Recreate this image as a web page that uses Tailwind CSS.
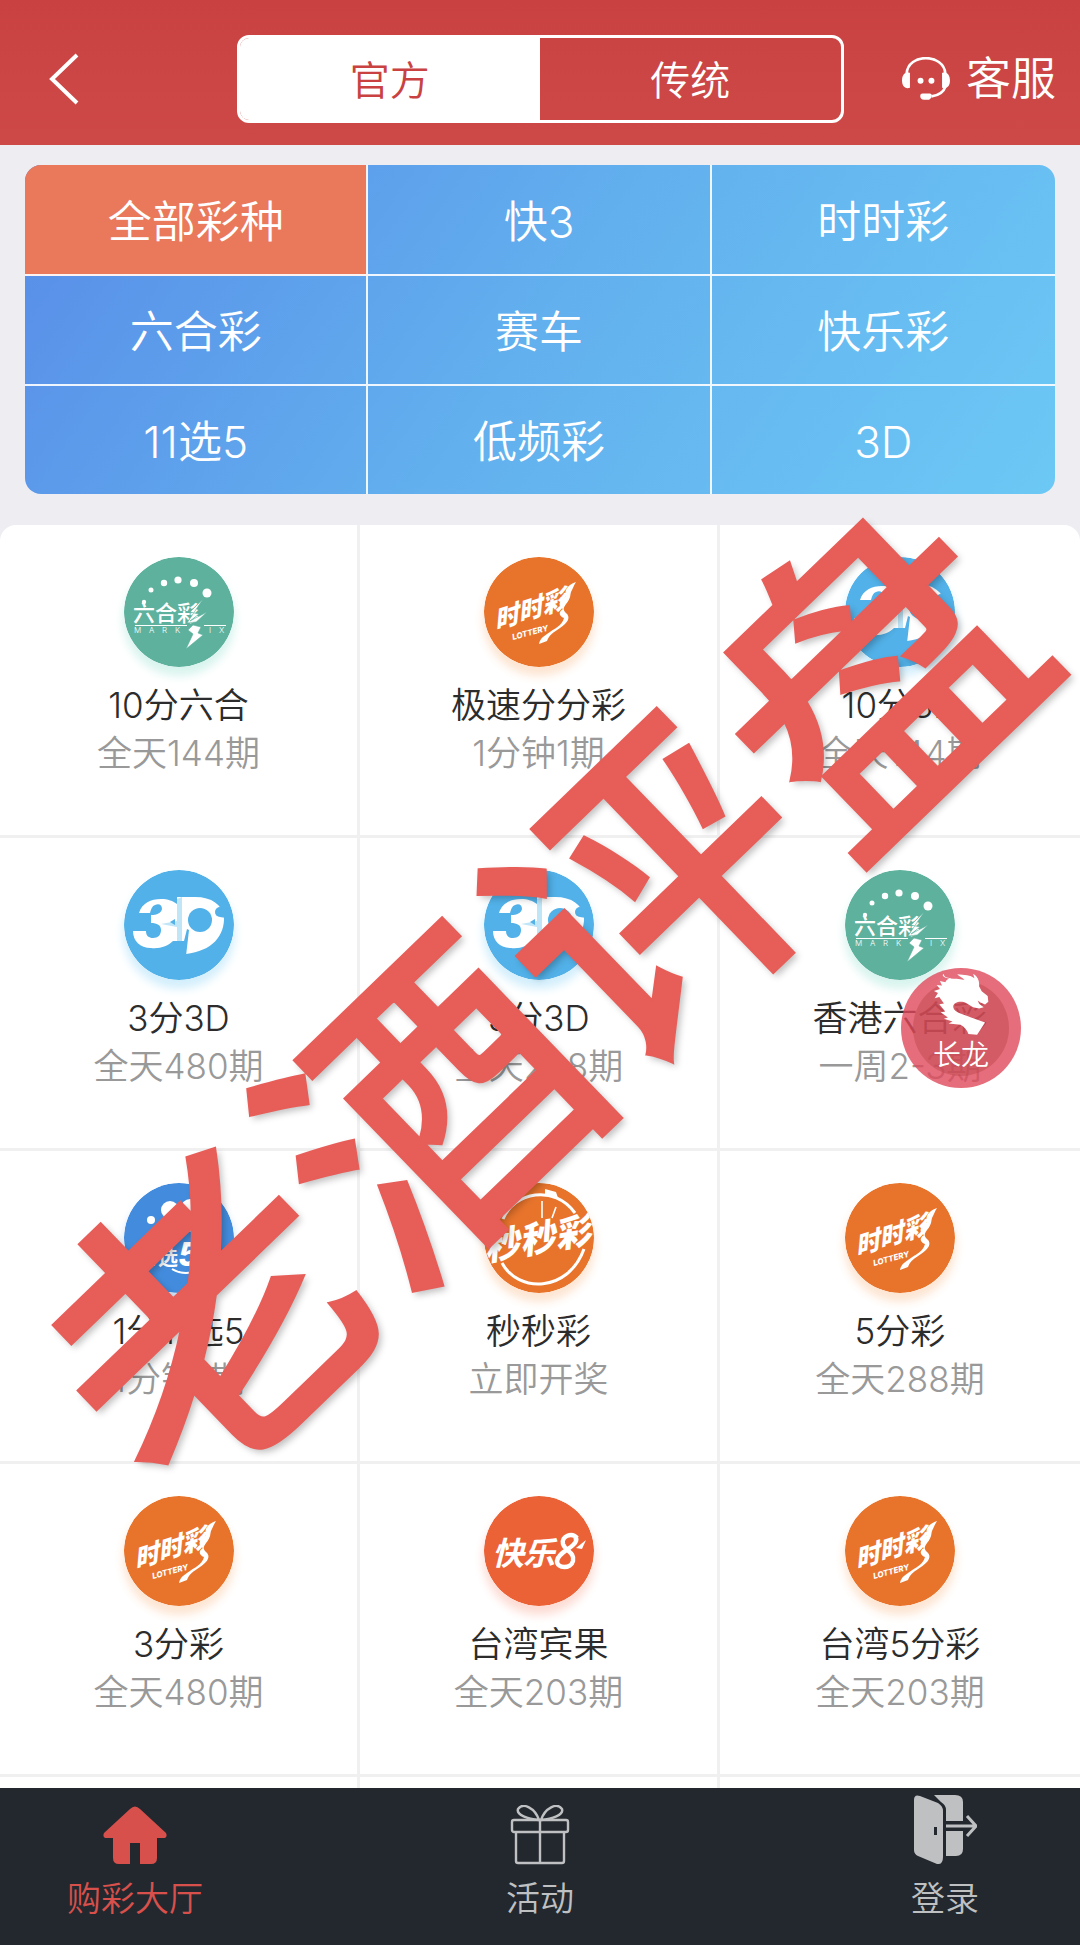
<!DOCTYPE html>
<html lang="zh-CN">
<head>
    <meta charset="UTF-8">
    <meta name="viewport" content="width=device-width, initial-scale=1.0">
    <title>购彩大厅</title>
    <script src="https://cdn.jsdelivr.net/npm/@tailwindcss/browser@4"></script>
    <style>
        body {
            font-family: 'Inter', 'Noto Sans CJK SC', sans-serif;
        }
    </style>
</head>
<body class="bg-[#eeedf2]">
    <!-- Iconos compartidos -->
    <svg class="hidden" aria-hidden="true">
        <symbol id="logo-lhc" viewBox="0 0 110 110">
            <circle cx="55" cy="55" r="55" fill="#5db19d"/>
            <g fill="#fff">
                <circle cx="20" cy="45" r="2.2"/><circle cx="27" cy="33" r="2.5"/><circle cx="40" cy="26" r="3.2"/><circle cx="54" cy="23" r="3.6"/><circle cx="70" cy="26" r="4"/><circle cx="83" cy="36" r="4.5"/>
                <text x="9" y="64" font-size="22" font-weight="500">六合彩</text>
                <path d="M79 42 66 55l9 2-9 7 17-9-14 13 8 2-3 6 5 2-17 14 7-15-5-4 8-8-9 1z" stroke="#5db19d" stroke-width=".6"/>
                <path d="M11 68h52v1H11zM80 68h22v1H80z"/>
                <g font-size="8"><text x="10" y="76">M</text><text x="25" y="76">A</text><text x="38" y="76">R</text><text x="51" y="76">K</text><text x="85" y="76">I</text><text x="95" y="76">X</text></g>
            </g>
        </symbol>
        <symbol id="logo-ssc" viewBox="0 0 110 110">
            <circle cx="55" cy="55" r="55" fill="#e8742c"/>
            <g fill="#fff">
                <text transform="translate(12 73) rotate(-18) skewX(-10)" font-size="25" font-weight="900" font-style="italic">时时彩</text>
                <text transform="translate(29 83) rotate(-15)" font-size="8" font-weight="800" font-style="italic">LOTTERY</text>
                <path d="M92 25c-9 3-12 9-10 14-8 5-8 10-3 13-5 3-4 7 1 9-2 8-9 10-17 16-6 4-7 6-8 10l8-3c2-6 7-9 13-13 8-5 11-11 6-15-3-3-3-5 0-9 5-6 4-9 5-12 2-4 3-7 5-10z"/>
            </g>
        </symbol>
        <symbol id="logo-3d" viewBox="0 0 110 110">
            <circle cx="55" cy="55" r="55" fill="#52b1e8"/>
            <path fill="#fff" d="M15 43C18 33 27 29 37 29c7 0 12 2 16 5V27h18c17 0 27 8 29 19 1 20-12 35-38 38V71H49c-5 5-13 8-22 7C16 78 9 71 9 61h13c0 5 3 7 7 7 5 0 8-3 8-8s-4-7-10-7v-8c6 0 10-2 11-6 0-4-3-6-7-4-3 1-4 4-5 8z"/>
            <circle cx="76" cy="50" r="12" fill="#52b1e8"/>
            <circle cx="96" cy="42" r="5" fill="#52b1e8"/>
            <path fill="#52b1e8" d="m96 40 6-3v11l-6-1zM65 60l-3 26-2-1V71l3-12z"/>
            <path fill="#bfe5f7" d="M53 29l5-2v44h-5V57L37 54l16-3z"/>
            <path fill="#52b1e8" d="m46 52 5-3v6z"/>
        </symbol>
        <symbol id="logo-11x5" viewBox="0 0 110 110">
            <circle cx="55" cy="55" r="55" fill="#438cdd"/>
            <g fill="#fff">
                <circle cx="46" cy="27" r="9"/><circle cx="66" cy="25" r="9"/><circle cx="27" cy="37" r="4"/><path d="M30 50c6-14 18-22 34-24l14 8v14z"/>
                <text x="11" y="83" font-size="25" font-weight="800" font-style="italic">11</text>
                <text x="34" y="82" font-size="20" font-weight="700">选</text>
                <text x="54" y="83" font-size="32" font-weight="800" font-style="italic">5</text>
            </g>
            <path d="M48 86q15 9 32-2" fill="none" stroke="#fff" stroke-width="2"/>
        </symbol>
        <symbol id="logo-mmc" viewBox="0 0 110 110">
            <circle cx="55" cy="55" r="55" fill="#e8742c"/>
            <g fill="none" stroke="#fff" stroke-width="3">
                <path d="M19 36C30 9 70 1 91 30"/>
                <path d="M18 80c16 30 66 30 82-14"/>
                <path d="M58 18v17M72 24l-4 11" stroke-width="1.6"/>
            </g>
            <path fill="#fff" d="M61 6l11 3 2 6-13-3z"/>
            <text transform="translate(2 78) rotate(-10)" font-size="36" font-weight="900" font-style="italic" fill="#fff">秒秒彩</text>
        </symbol>
        <symbol id="logo-kl8" viewBox="0 0 110 110">
            <circle cx="55" cy="55" r="55" fill="#eb6237"/>
            <g fill="#fff" font-weight="700" font-style="italic">
                <text x="8" y="69" font-size="32">快</text>
                <text x="39" y="69" font-size="32">乐</text>
            </g>
            <path d="M93 42C88 36 77 40 79 48c2 7 12 8 10 17-2 8-16 8-16 0 1-9 17-13 19-20q1-3-2-4" fill="none" stroke="#fff" stroke-width="4.5"/>
            <path d="M92 52l10-8-4 9z" fill="#fff"/>
        </symbol>
    </svg>

    <div class="relative flex h-screen flex-col overflow-hidden">
        <header class="grid h-[145px] shrink-0 grid-cols-[1fr_607px_1fr] items-center bg-linear-to-b from-[#c94241] to-[#cd4948] pt-3 text-white">
            <button type="button" aria-label="返回" class="pl-12">
                <svg class="h-[52px] w-[32px]" viewBox="0 0 32 52" fill="none" stroke="currentColor" stroke-width="4"><path d="M29 2 4 26l25 24"/></svg>
            </button>
            <div class="flex h-[88px] overflow-hidden rounded-xl border-[3px] border-white text-[40px] font-[350]">
                <button type="button" class="flex-1 bg-white pt-1 text-[#c94241]">官方</button>
                <button type="button" class="flex-1 pt-1">传统</button>
            </div>
            <button type="button" class="flex items-center justify-end gap-4 pr-6 text-[45px] font-[350]">
                <svg class="h-[43px] w-[48px]" viewBox="0 0 145 130" fill="none" stroke="currentColor" stroke-width="8">
                    <path d="M14 50C18-12 126-12 131 50M131 90c-6 18-20 26-42 29"/>
                    <path d="M24 48v45C8 98 0 86 0 71s8-27 24-23zM121 48v45c16 5 24-7 24-22s-8-27-24-23zM62 110h22q6 0 6 7t-8 12H67q-12 0-12-12 0-7 7-7z" fill="currentColor" stroke="none"/>
                    <circle cx="56" cy="72" r="9" fill="currentColor" stroke="none"/><circle cx="89" cy="72" r="9" fill="currentColor" stroke="none"/>
                </svg>
                <span>客服</span>
            </button>
        </header>

        <nav class="mx-[25px] mt-5 grid shrink-0 grid-cols-3 overflow-hidden rounded-2xl bg-linear-[125deg] from-[#588ce8] via-[#62b0ee] to-[#6cc8f5] text-[44px] font-[350] text-white">
            <button type="button" class="h-[111px] border-r-2 border-b-2 border-white/90 bg-[#ea785b] pt-1">全部彩种</button>
            <button type="button" class="h-[111px] border-r-2 border-b-2 border-white/90 pt-1">快3</button>
            <button type="button" class="h-[111px] border-b-2 border-white/90 pt-1">时时彩</button>
            <button type="button" class="h-[110px] border-r-2 border-b-2 border-white/90 pt-1">六合彩</button>
            <button type="button" class="h-[110px] border-r-2 border-b-2 border-white/90 pt-1">赛车</button>
            <button type="button" class="h-[110px] border-b-2 border-white/90 pt-1">快乐彩</button>
            <button type="button" class="h-[108px] border-r-2 border-white/90 pt-1">11选5</button>
            <button type="button" class="h-[108px] border-r-2 border-white/90 pt-1">低频彩</button>
            <button type="button" class="h-[108px] pt-1">3D</button>
        </nav>

        <main class="mt-[31px] min-h-0 flex-1 overflow-hidden rounded-t-2xl bg-white">
            <ul id="lotteryList" class="grid grid-cols-3 text-center text-[35px] leading-[48px] font-[350]"></ul>
        </main>

        <footer class="flex h-[157px] shrink-0 items-start justify-between bg-[#23282e] px-[67px] text-[34px] leading-[44px] font-[350] text-[#bfc0c2]">
            <a href="#" class="flex w-[136px] flex-col items-center pt-[17px] text-[#d8504b]">
                <svg class="h-[60px] w-[64px]" viewBox="0 0 64 60" fill="currentColor"><path d="M27 4q5-5 10 0l26 24q2 5-3 5h-6v20q0 6-6 6H37V38H27v21H16q-6 0-6-6V33H4q-5 0-3-5z"/></svg>
                <span class="mt-[12px]">购彩大厅</span>
            </a>
            <a href="#" class="flex w-[136px] flex-col items-center pt-[17px]">
                <svg class="h-[60px] w-[60px]" viewBox="0 0 60 60" fill="none" stroke="currentColor" stroke-width="2.4">
                    <rect x="2" y="15" width="56" height="12" rx="2"/><path d="M6 27v29q0 2 2 2h44q2 0 2-2V27M30 15v43M29 15C18 14 6 10 8 4c5-7 17-1 21 11zM31 15C42 14 54 10 52 4 47-3 35 3 31 15z"/>
                </svg>
                <span class="mt-[12px]">活动</span>
            </a>
            <a href="#" class="flex w-[136px] flex-col items-center pt-[7px]">
                <svg class="h-[70px] w-[64px]" viewBox="0 0 64 70" fill="currentColor">
                    <path fill-rule="evenodd" d="M1 5q0-6 6-4l18 7q5 3 5 8v46q0 8-6 7L5 61q-4-2-4-6zM21 32v8h3v-8z"/>
                    <path d="M21 0h21q8 0 8 7v19H33V15q0-5-5-8zM33 36h17v18q0 7-7 7H33z"/>
                    <path d="M33 31h29M54 21l9 10-9 10" fill="none" stroke="currentColor" stroke-width="3"/>
                </svg>
                <span class="mt-[12px]">登录</span>
            </a>
        </footer>

        <!-- Marca de agua -->
        <p class="pointer-events-none absolute top-[1003px] left-[544px] -translate-x-1/2 -translate-y-1/2 -rotate-44 text-[310px] leading-none font-medium whitespace-nowrap text-[#e75d58] [-webkit-text-stroke:2px_#e75d58] [text-shadow:0_5px_7px_rgba(0,0,0,0.25)]">老酒评盘</p>

        <!-- Botón flotante -->
        <button type="button" class="absolute top-[968px] right-[59px] flex size-[120px] flex-col items-center rounded-full bg-[#e0485a]/80 text-white">
            <span class="absolute inset-3 rounded-full bg-[#c04a50]/50"></span>
            <svg class="relative mt-[6px] h-[63px] w-[58px]" viewBox="130 60 175 190" fill="currentColor">
                <path d="M162 64c8 16 32 6 66 14-6-8-16-10-22-17 22 2 40 2 52 12l-4-14c14 8 20 22 18 38l8 15 18 14 2 18-10 8-14-6-8-6 4 10 14 10-14 4-18-4-20-12c-16-8-38-4-40 10 0 14 18 20 34 26l62 22-24 37-26-2c-4-12-12-22-24-28l-36-4 12-6-26-8 12-4-22-16 14-2-18-22 14-2-14-20-14 4 10-16-12-6 18-6-10-12 16 2-6-14 16 4c4-8 10-12 18-12-16-2-24-6-22-15z"/>
            </svg>
            <span class="relative text-[28px] leading-[36px] font-[350]">长龙</span>
        </button>
    </div>

    <script>
        const lotteries = [
            { logo: "lhc", glow: "#d8f4ee", name: "10分六合", info: "全天144期" },
            { logo: "ssc", glow: "#fde5d2", name: "极速分分彩", info: "1分钟1期" },
            { logo: "3d", glow: "#d3effc", name: "10分3D", info: "全天144期" },
            { logo: "3d", glow: "#d3effc", name: "3分3D", info: "全天480期" },
            { logo: "3d", glow: "#d3effc", name: "5分3D", info: "全天288期" },
            { logo: "lhc", glow: "#d8f4ee", name: "香港六合彩", info: "一周2-3期" },
            { logo: "11x5", glow: "#d3e4fa", name: "1分11选5", info: "1分钟1期" },
            { logo: "mmc", glow: "#fde5d2", name: "秒秒彩", info: "立即开奖" },
            { logo: "ssc", glow: "#fde5d2", name: "5分彩", info: "全天288期" },
            { logo: "ssc", glow: "#fde5d2", name: "3分彩", info: "全天480期" },
            { logo: "kl8", glow: "#fddcd4", name: "台湾宾果", info: "全天203期" },
            { logo: "ssc", glow: "#fde5d2", name: "台湾5分彩", info: "全天203期" },
            null, null, null
        ];

        document.getElementById("lotteryList").innerHTML = lotteries.map((item) => {
            if (!item) {
                return `<li class="h-[313px] border-r-[3px] border-[#f0f0f0] nth-[3n]:border-r-0"></li>`;
            }
            return `
                <li class="h-[313px] border-r-[3px] border-b-[3px] border-[#f0f0f0] pt-8 nth-[3n]:border-r-0">
                    <a href="#" class="flex flex-col items-center">
                        <svg class="size-[110px] rounded-full" style="box-shadow: 0 8px 10px 1px ${item.glow}" viewBox="0 0 110 110"><use href="#logo-${item.logo}"/></svg>
                        <span class="mt-[14px] text-[#2c2c2c]">${item.name}</span>
                        <span class="text-[#999999]">${item.info}</span>
                    </a>
                </li>`;
        }).join("");
    </script>
</body>
</html>
